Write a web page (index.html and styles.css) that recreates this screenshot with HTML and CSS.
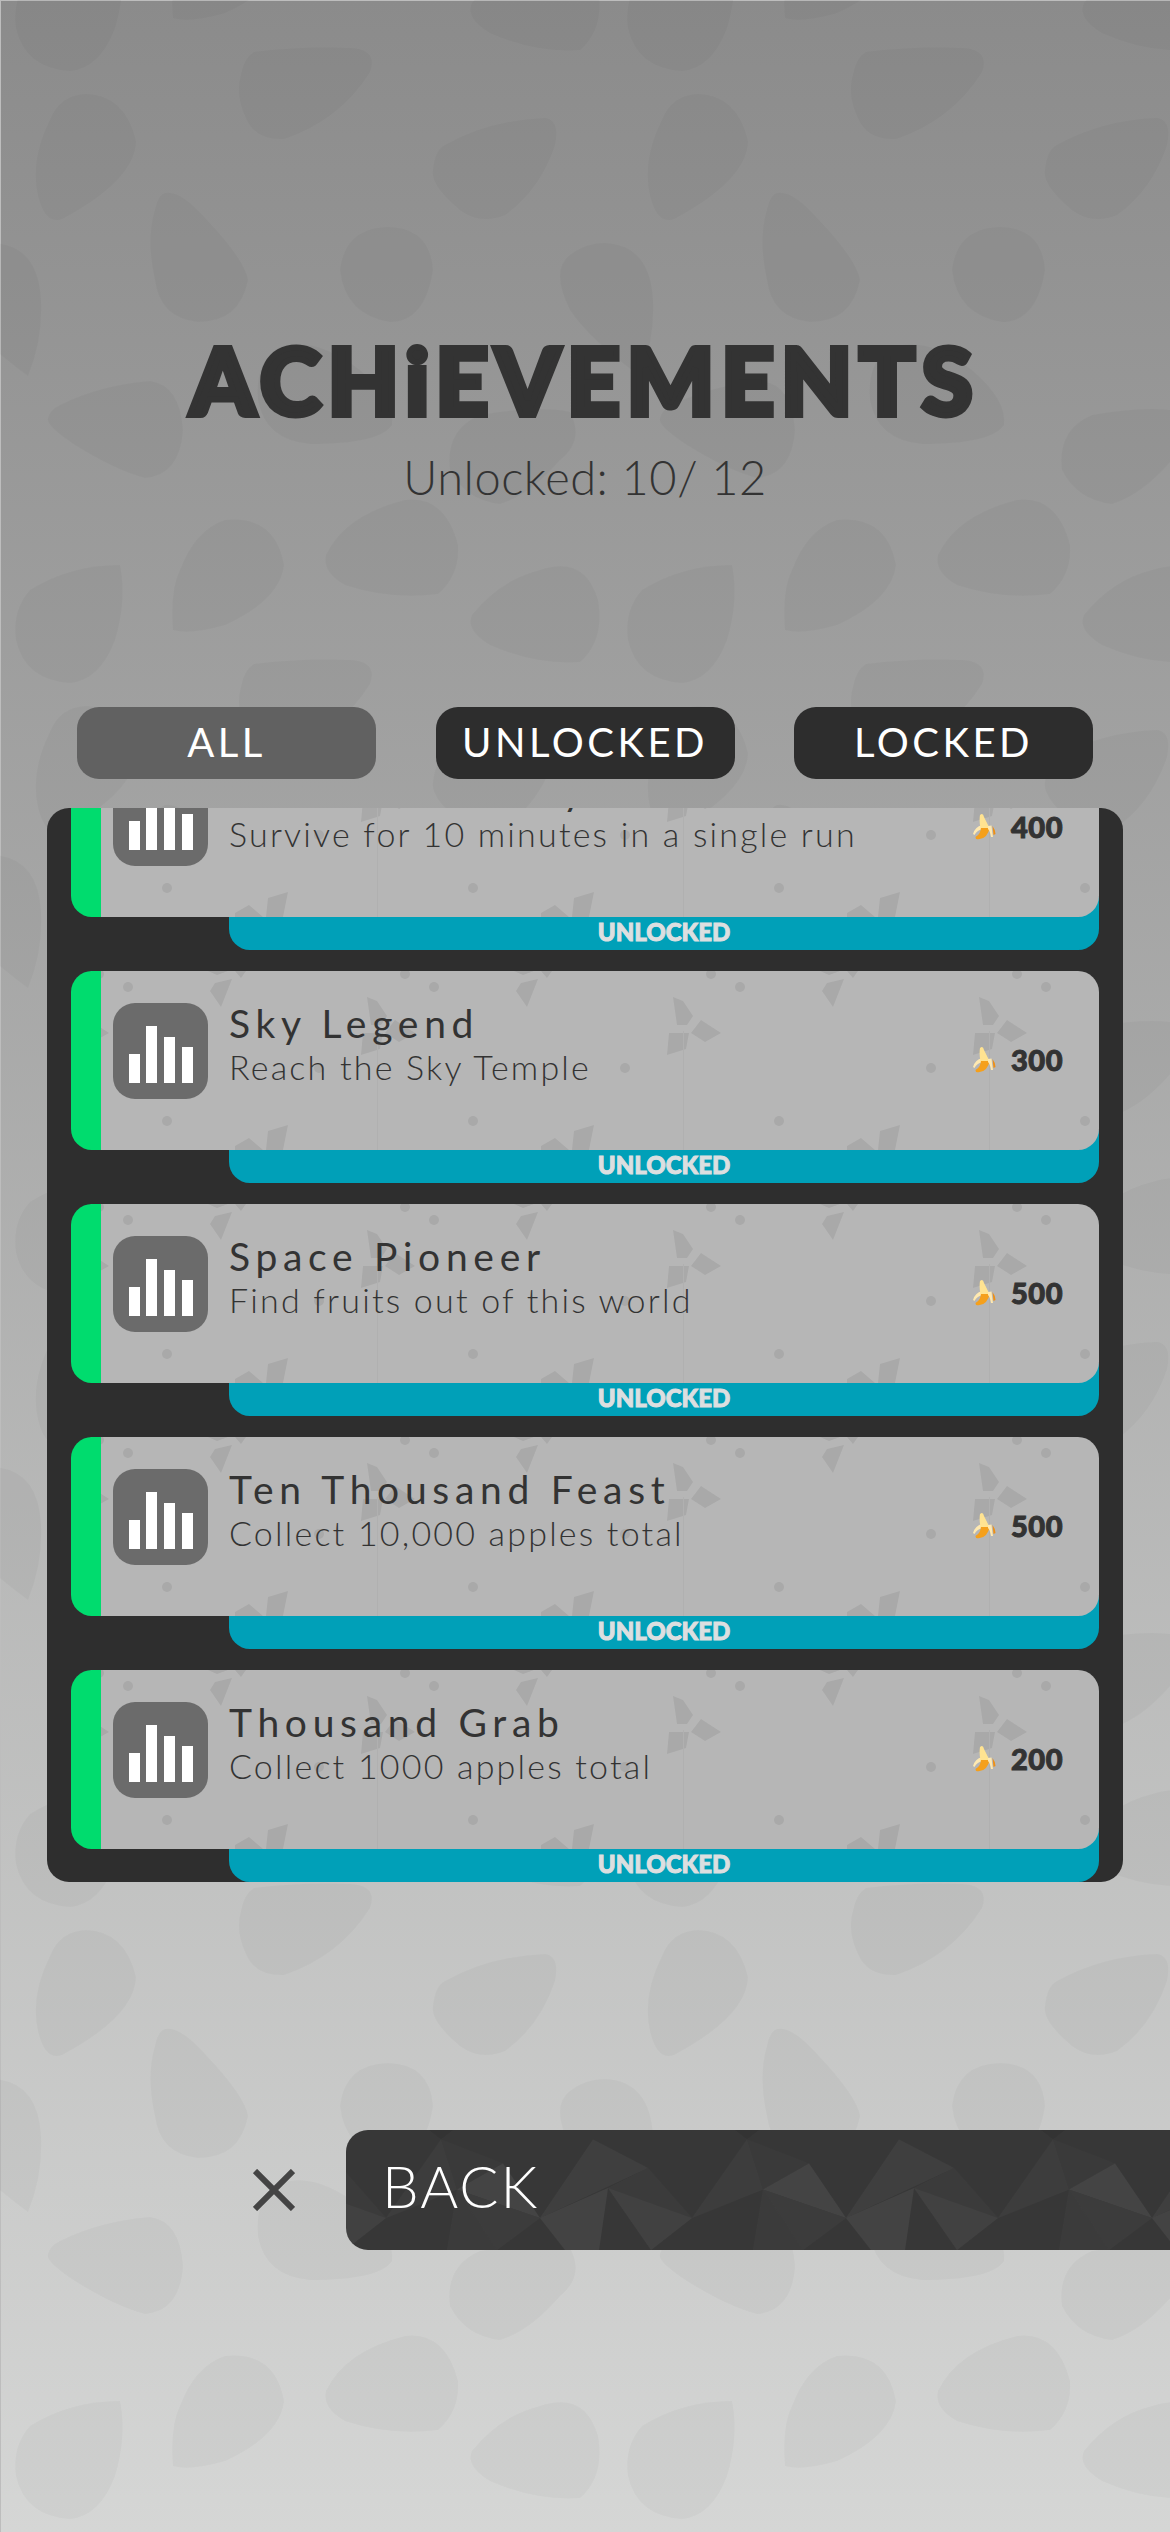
FILE: index.html
```html
<!DOCTYPE html>
<html lang="en">
<head>
  <meta charset="UTF-8">
  <title>Achievements</title>
  <link rel="stylesheet" href="styles.css">
</head>
<body>
  <svg class="backdrop" width="1170" height="2532" viewBox="0 0 1170 2532" aria-hidden="true">
    <defs>
      <g id="tile">
        <path d="M254 52 Q300 46 351 48 Q378 50 370 72 Q340 120 284 139 Q255 140 246 118 Q235 95 241 75 Q244 58 254 52Z"/>
        <path d="M86 94 Q125 95 136 141 Q135 180 62 219 Q45 225 38 195 Q30 160 50 120 Q60 95 86 94Z"/>
        <path d="M445 145 Q490 120 545 118 Q560 120 555 145 Q540 190 505 215 Q480 225 460 210 Q430 185 433 170 Q435 150 445 145Z"/>
        <path d="M165 193 Q180 190 205 218 Q245 260 248 280 Q240 322 198 322 Q160 318 155 280 Q146 240 155 210 Q158 195 165 193Z"/>
        <path d="M388 227 Q430 228 433 270 Q425 322 390 322 Q345 315 340 270 Q345 228 388 227Z"/>
        <path d="M605 243 Q650 245 653 300 Q655 340 640 376 Q590 340 570 310 Q550 270 570 255 Q585 243 605 243Z"/>
        <path d="M60 405 Q100 385 150 381 Q180 385 183 430 Q180 475 145 478 Q115 470 75 445 Q45 425 48 418 Q50 410 60 405Z"/>
        <path d="M290 345 Q320 340 360 370 Q395 400 392 425 Q380 444 310 444 Q265 440 258 400 Q255 365 275 350 Q282 345 290 345Z"/>
        <path d="M480 415 Q540 405 570 412 Q585 440 560 460 Q530 495 500 504 Q465 500 450 470 Q445 430 480 415Z"/>
        <path d="M405 500 Q445 495 458 545 Q460 575 438 594 Q390 600 345 585 Q322 572 326 555 Q345 515 405 500Z"/>
        <path d="M225 520 Q275 515 284 565 Q280 600 225 625 Q190 635 173 630 Q170 590 180 570 Q195 530 225 520Z"/>
        <path d="M540 570 Q585 555 598 600 Q605 640 580 662 Q535 665 490 645 Q465 630 472 615 Q500 580 540 570Z"/>
        <path d="M120 565 Q127 600 115 640 Q100 680 70 683 Q25 680 16 640 Q12 610 30 590 Q70 565 120 565Z"/>
      </g>
      <g id="tile-row">
        <use href="#tile" x="-612"/>
        <use href="#tile"/>
        <use href="#tile" x="612"/>
      </g>
      <symbol id="bars" viewBox="0 0 95 96">
        <rect x="16" y="51" width="11" height="29" fill="#fff"/>
        <rect x="33" y="23" width="11" height="57" fill="#fff"/>
        <rect x="51" y="34" width="11" height="46" fill="#fff"/>
        <rect x="69" y="44" width="11" height="36" fill="#fff"/>
      </symbol>
      <symbol id="banana" viewBox="0 0 23 27">
        <path d="M0 21 Q2 14 9 12 L10 16 Q4 17 1.500 22Z" fill="#ffe9b0"/>
        <path d="M3 26 Q14 28 17 14 L8 14 Q8 21 2.500 24Z" fill="#f5a01c"/>
        <path d="M7 2 Q10 -1 11 4 L16.500 15 L7.500 15 Q6 8 7 2Z" fill="#ffe391"/>
        <path d="M15 13 L18.500 12.500 Q19 18 20 24 L18 24 Q17 18 15 16Z" fill="#ffe9b0"/>
        <path d="M19.500 13 Q22.500 17 22.500 21 L20.500 22 Q20 17 19.500 13Z" fill="#ee8f14"/>
      </symbol>
    </defs>
    <use href="#tile-row" y="-612"/>
    <use href="#tile-row"/>
    <use href="#tile-row" y="612"/>
    <use href="#tile-row" y="1224"/>
    <use href="#tile-row" y="1836"/>
  </svg>

  <div class="page">
    <div class="header">
      <h1>ACHiEVEMENTS</h1>
      <p class="progress">Unlocked: 10/ 12</p>
    </div>

    <div class="tabs">
      <button class="tab tab-active">ALL</button>
      <button class="tab">UNLOCKED</button>
      <button class="tab">LOCKED</button>
    </div>

    <div class="panel">
      <div class="list">
        <div class="item">
          <div class="card">
            <div class="icon"><svg width="95" height="96"><use href="#bars"/></svg></div>
            <div class="info">
              <div class="name">Endless Journey</div>
              <div class="desc">Survive for 10 minutes in a single run</div>
            </div>
            <div class="reward"><svg width="23" height="27"><use href="#banana"/></svg><span>400</span></div>
          </div>
          <div class="status">UNLOCKED</div>
        </div>
        <div class="item">
          <div class="card">
            <div class="icon"><svg width="95" height="96"><use href="#bars"/></svg></div>
            <div class="info">
              <div class="name">Sky Legend</div>
              <div class="desc">Reach the Sky Temple</div>
            </div>
            <div class="reward"><svg width="23" height="27"><use href="#banana"/></svg><span>300</span></div>
          </div>
          <div class="status">UNLOCKED</div>
        </div>
        <div class="item">
          <div class="card">
            <div class="icon"><svg width="95" height="96"><use href="#bars"/></svg></div>
            <div class="info">
              <div class="name">Space Pioneer</div>
              <div class="desc">Find fruits out of this world</div>
            </div>
            <div class="reward"><svg width="23" height="27"><use href="#banana"/></svg><span>500</span></div>
          </div>
          <div class="status">UNLOCKED</div>
        </div>
        <div class="item">
          <div class="card">
            <div class="icon"><svg width="95" height="96"><use href="#bars"/></svg></div>
            <div class="info">
              <div class="name">Ten Thousand Feast</div>
              <div class="desc">Collect 10,000 apples total</div>
            </div>
            <div class="reward"><svg width="23" height="27"><use href="#banana"/></svg><span>500</span></div>
          </div>
          <div class="status">UNLOCKED</div>
        </div>
        <div class="item">
          <div class="card">
            <div class="icon"><svg width="95" height="96"><use href="#bars"/></svg></div>
            <div class="info">
              <div class="name">Thousand Grab</div>
              <div class="desc">Collect 1000 apples total</div>
            </div>
            <div class="reward"><svg width="23" height="27"><use href="#banana"/></svg><span>200</span></div>
          </div>
          <div class="status">UNLOCKED</div>
        </div>
      </div>
    </div>

    <div class="footer">
      <svg class="close" width="42" height="42" viewBox="0 0 42 42"><path d="M2 2 L40 40 M40 2 L2 40" stroke="#444" stroke-width="6" fill="none"/></svg>
      <div class="back">BACK</div>
    </div>
  </div>
</body>
</html>
```

FILE: styles.css
```css
body {
  margin: 0;
  width: 1170px;
  height: 2532px;
  overflow: hidden;
  position: relative;
  font-family: "Lato", sans-serif;
  color: #333;
  background: linear-gradient(#8b8b8b, #d5d6d5);
  box-shadow: inset 1px 1px 0 #bdbdbd;
}
.backdrop {
  position: absolute;
  top: 0;
  left: 0;
  fill: rgba(0, 0, 0, 0.028);
}
.page {
  position: relative;
  display: flex;
  flex-direction: column;
}
.header {
  height: 707px;
  padding-top: 332px;
  box-sizing: border-box;
  text-align: center;
}
h1 {
  margin: 0;
  font-size: 92px;
  line-height: 96px;
  font-weight: 900;
  letter-spacing: 7px;
  color: #333;
  -webkit-text-stroke: 6px #333;
}
.progress {
  margin: 21px 0 0;
  font-size: 47px;
  line-height: 56px;
  font-weight: 300;
  letter-spacing: 0.5px;
  color: #333;
}
.tabs {
  display: flex;
  justify-content: space-between;
  padding: 0 77px;
}
.tab {
  width: 299px;
  height: 72px;
  padding: 0 0 2px;
  border: none;
  border-radius: 22px;
  font-family: inherit;
  font-size: 40px;
  letter-spacing: 3.5px;
  color: #fff;
  background-color: #2d2d2d;
}
.tab-active {
  background-color: #616161;
}
.panel {
  height: 1074px;
  margin: 29px 47px 0;
  padding: 0 24px;
  border-radius: 22px;
  overflow: hidden;
  background-color: #2e2e2e;
}
.list {
  display: flex;
  flex-direction: column;
  gap: 21px;
  margin-top: -70px;
}
.item {
  display: flex;
  flex-direction: column;
}
.card {
  position: relative;
  display: flex;
  height: 179px;
  box-sizing: border-box;
  border-left: 30px solid #00dc6e;
  border-radius: 21px;
  background-color: #b6b6b6;
  background-origin: border-box;
  background-image: url("data:image/svg+xml,%3Csvg xmlns='http://www.w3.org/2000/svg' width='306' height='179' viewBox='0 0 306 179'%3E%3Cg fill='%23a9a9a9'%3E%3Ccircle cx='57' cy='16' r='5'/%3E%3Ccircle cx='28' cy='3' r='5'/%3E%3Ccircle cx='248' cy='97' r='5'/%3E%3Ccircle cx='96' cy='150' r='5'/%3E%3Cpath d='M0 44V30L10 45L4 54H0Z'/%3E%3Cpath d='M296 26L306 30V54H300Z'/%3E%3Cpath d='M8 62L18 49L38 62L22 71Z'/%3E%3Cpath d='M0 62H6L3 78L0 79Z'/%3E%3Cpath d='M292 62L306 62V79L290 84Z'/%3E%3Cpath d='M144 12L161 8L150 36L139 20Z'/%3E%3Cpath d='M137 0H157L146 4Z'/%3E%3Cpath d='M164 0H175L170 7Z'/%3E%3Cpath d='M164 175L178 167L192 179H164Z'/%3E%3Cpath d='M197 160L217 154L212 179H195Z'/%3E%3C/g%3E%3Cpath d='M0.500 60V179' stroke='%23b0b0b0' stroke-width='1'/%3E%3C/svg%3E");
}
.icon {
  width: 95px;
  height: 96px;
  margin: 32px 0 0 12px;
  border-radius: 22px;
  flex-shrink: 0;
  background-color: #6b6b6b;
}
.info {
  margin: 29px 0 0 21px;
  flex-grow: 1;
}
.name {
  font-size: 39px;
  line-height: 46px;
  font-weight: 400;
  letter-spacing: 5.7px;
  color: #333;
}
.desc {
  margin-top: -1px;
  font-size: 34px;
  line-height: 44px;
  font-weight: 300;
  letter-spacing: 2.2px;
  color: #333;
}
.reward {
  display: flex;
  align-items: center;
  gap: 15px;
  margin: 0 36px 3px 0;
  font-size: 29px;
  font-weight: 900;
  letter-spacing: 0.5px;
  -webkit-text-stroke: 1px #333;
}
.status {
  height: 53px;
  margin: -20px 0 0 158px;
  padding-top: 20px;
  box-sizing: border-box;
  border-radius: 0 0 21px 21px;
  text-align: center;
  font-size: 24px;
  line-height: 30px;
  font-weight: 900;
  color: #dcdfe0;
  -webkit-text-stroke: 1px #dcdfe0;
  background-color: #00a0b8;
}
.footer {
  display: flex;
  align-items: center;
  gap: 51px;
  margin: 248px 0 0 253px;
}
.close {
  flex-shrink: 0;
}
.back {
  flex-grow: 1;
  height: 120px;
  padding-left: 36px;
  border-radius: 22px 0 0 22px;
  font-size: 58px;
  line-height: 112px;
  font-weight: 300;
  letter-spacing: 2px;
  color: #fff;
  background-color: #373737;
  background-position: 194px 0;
  background-image: url("data:image/svg+xml,%3Csvg xmlns='http://www.w3.org/2000/svg' width='306' height='120' viewBox='0 0 306 120'%3E%3Cpath d='M53 9.500L108 38L0 88Z' fill='%233f3f3f'/%3E%3Cpath d='M108 38L152 88L68 58Z' fill='%233b3b3b'/%3E%3Cpath d='M0 88L68 58L59 120H25Z' fill='%23434343'/%3E%3Cpath d='M68 58L152 88L111 120Z' fill='%23414141'/%3E%3Cpath d='M207 9.500L152 88L223 59.500Z' fill='%233d3d3d'/%3E%3Cpath d='M207 9.500L269 33.500L223 59.500Z' fill='%233a3a3a'/%3E%3Cpath d='M269 33.500L306 88L223 59.500Z' fill='%23444444'/%3E%3Cpath d='M223 59.500L263 120H213Z' fill='%233b3b3b'/%3E%3Cpath d='M223 59.500L306 88L263 120Z' fill='%233c3c3c'/%3E%3Cpath d='M195 0H219L207 9.500Z' fill='%23333333'/%3E%3C/svg%3E");
}
```
